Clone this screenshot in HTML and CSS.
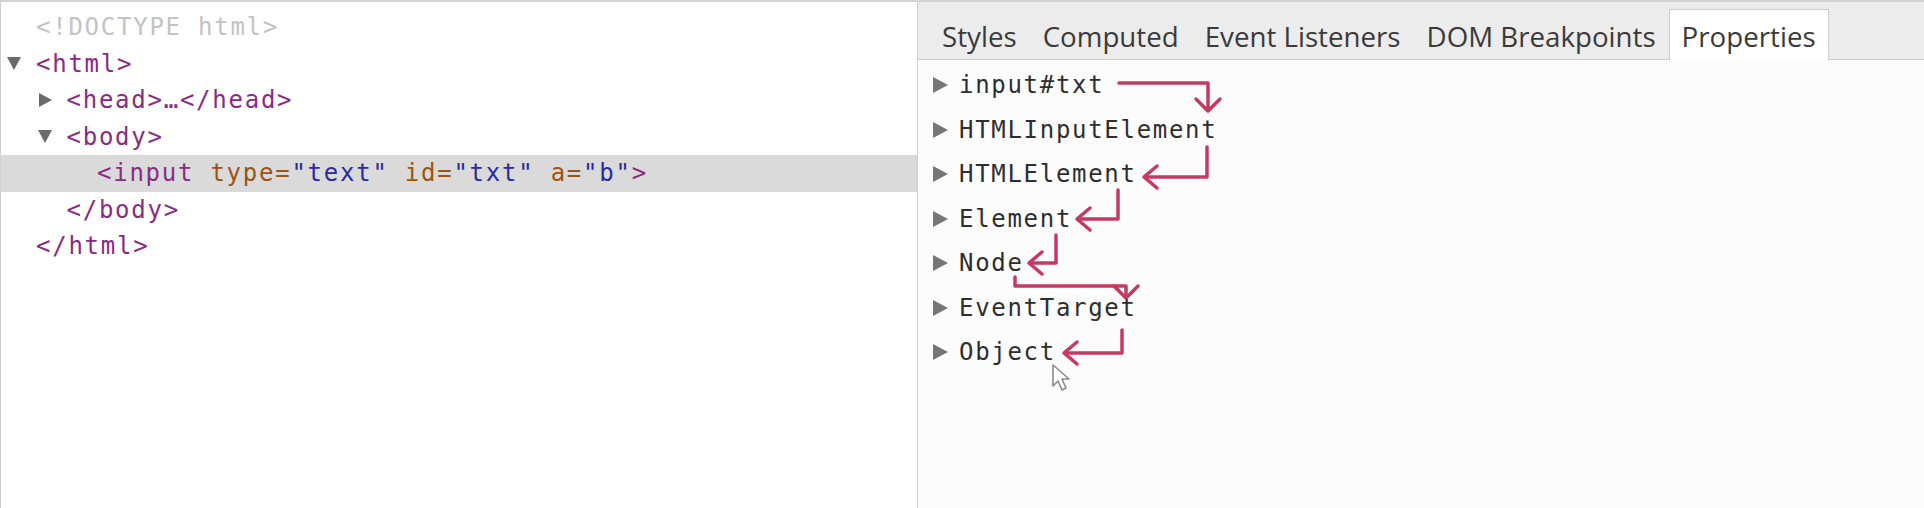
FILE: index.html
```html
<!DOCTYPE html>
<html>
<head>
<meta charset="utf-8">
<link rel="stylesheet" href="styles.css">
</head>
<body>
<div class="devtools">
  <div class="elements">
    <div class="row l0"><span class="sp"></span><span class="doctype">&lt;!DOCTYPE html&gt;</span></div>
    <div class="row l0"><span class="tw"><span class="tri-down"></span></span><span class="tag">&lt;html&gt;</span></div>
    <div class="row l1"><span class="tw"><span class="tri-right"></span></span><span class="tag">&lt;head&gt;</span><span class="tag ell">…</span><span class="tag">&lt;/head&gt;</span></div>
    <div class="row l1"><span class="tw"><span class="tri-down"></span></span><span class="tag">&lt;body&gt;</span></div>
    <div class="row l2 selected"><span class="sp"></span><span class="tag">&lt;input</span>&nbsp;<span class="attr">type=</span><span class="val">"text"</span>&nbsp;<span class="attr">id=</span><span class="val">"txt"</span>&nbsp;<span class="attr">a=</span><span class="val">"b"</span><span class="tag">&gt;</span></div>
    <div class="row l1"><span class="sp"></span><span class="tag">&lt;/body&gt;</span></div>
    <div class="row l0"><span class="sp"></span><span class="tag">&lt;/html&gt;</span></div>
  </div>
  <div class="sidebar">
    <div class="tabbar">
      <div class="tab">Styles</div>
      <div class="tab">Computed</div>
      <div class="tab">Event Listeners</div>
      <div class="tab">DOM Breakpoints</div>
      <div class="tab active">Properties</div>
    </div>
    <div class="props">
      <div class="prow"><span class="ptri"></span>input#txt</div>
      <div class="prow"><span class="ptri"></span>HTMLInputElement</div>
      <div class="prow"><span class="ptri"></span>HTMLElement</div>
      <div class="prow"><span class="ptri"></span>Element</div>
      <div class="prow"><span class="ptri"></span>Node</div>
      <div class="prow"><span class="ptri"></span>EventTarget</div>
      <div class="prow"><span class="ptri"></span>Object</div>
    </div>
  </div>
  <svg class="annot" width="1924" height="508" viewBox="0 0 1924 508">
    <g fill="none" stroke="#c43a62" stroke-width="3.5" stroke-linecap="round" stroke-linejoin="round">
      <path d="M1119 83 H1208 V110"/>
      <path d="M1196 99 L1208 111 L1220 99"/>
      <path d="M1207 147 V177 H1145"/>
      <path d="M1157 166 L1144 177 L1157 188"/>
      <path d="M1118 190 V219 H1078"/>
      <path d="M1090 208 L1077 219 L1090 230"/>
      <path d="M1056 235 V263 H1030"/>
      <path d="M1042 252 L1029 263 L1042 274"/>
      <path d="M1015 277 V286 H1126 V296"/>
      <path d="M1114 286 L1126 298 L1138 286"/>
      <path d="M1122 330 V353 H1065"/>
      <path d="M1077 342 L1064 353 L1077 364"/>
    </g>
    <path class="cursor" d="M1053 365 L1053 386 L1058 381 L1062 390 L1066 388 L1062 379 L1069 379 Z" fill="#ffffff" stroke="#8a8a8a" stroke-width="1.6" stroke-linejoin="round"/>
  </svg>
</div>
</body>
</html>
```

FILE: styles.css
```css
html, body {
  margin: 0;
  padding: 0;
  background: #ffffff;
}

body {
  font-family: "DejaVu Sans Mono", "Liberation Mono", monospace;
  width: 1924px;
  height: 508px;
  overflow: hidden;
}

.devtools {
  position: relative;
  display: flex;
  height: 508px;
  box-sizing: border-box;
  border-top: 2px solid #d3d3d3;
}

.elements {
  width: 918px;
  flex: none;
  box-sizing: border-box;
  border-left: 1px solid #d0d0d0;
  border-right: 1px solid #d0d0d0;
  padding-top: 7px;
  background: #ffffff;
}

.row {
  display: flex;
  align-items: center;
  height: 36.5px;
  font-size: 24px;
  letter-spacing: 1.75px;
  white-space: pre;
  color: #8b2a83;
}

.l0 { padding-left: 5px; }
.l1 { padding-left: 35.5px; }
.l2 { padding-left: 66px; }

.selected {
  background: #dadada;
}

.tw, .sp {
  width: 30px;
  flex: none;
  display: flex;
  align-items: center;
}

.tri-down {
  margin-left: 1px;
  width: 0;
  height: 0;
  border-left: 7px solid transparent;
  border-right: 7px solid transparent;
  border-top: 13px solid #6a6a6a;
}

.tri-right {
  margin-left: 2px;
  width: 0;
  height: 0;
  border-top: 7px solid transparent;
  border-bottom: 7px solid transparent;
  border-left: 13px solid #6a6a6a;
}

.doctype { color: #c3c3c3; }
.tag { color: #8b2a83; }
.attr { color: #9a5512; }
.val { color: #2b2ba0; }

.sidebar {
  flex: 1;
  display: flex;
  flex-direction: column;
  background: #fcfcfc;
}

.tabbar {
  height: 57px;
  flex: none;
  display: flex;
  align-items: flex-end;
  padding-left: 11px;
  background: #ececec;
  border-bottom: 1px solid #cdcdcd;
}

.tab {
  height: 50px;
  box-sizing: border-box;
  display: flex;
  align-items: center;
  padding: 1px 12px 0;
  margin-bottom: -1px;
  border: 1px solid transparent;
  border-bottom: none;
  font-family: "Open Sans", "Noto Sans", sans-serif;
  font-size: 27.7px;
  color: #3a3a3a;
  white-space: nowrap;
}

.tab.active {
  height: 51px;
  background: #ffffff;
  border-color: #cccccc;
}

.props {
  padding: 3px 0 0 15px;
}

.prow {
  display: flex;
  align-items: center;
  height: 44.5px;
  font-size: 24px;
  letter-spacing: 1.7px;
  color: #2e2e2e;
}

.ptri {
  flex: none;
  width: 0;
  height: 0;
  margin-right: 11px;
  border-top: 8px solid transparent;
  border-bottom: 8px solid transparent;
  border-left: 15px solid #767676;
}

.annot {
  position: absolute;
  left: 0;
  top: -2px;
  pointer-events: none;
}
```
